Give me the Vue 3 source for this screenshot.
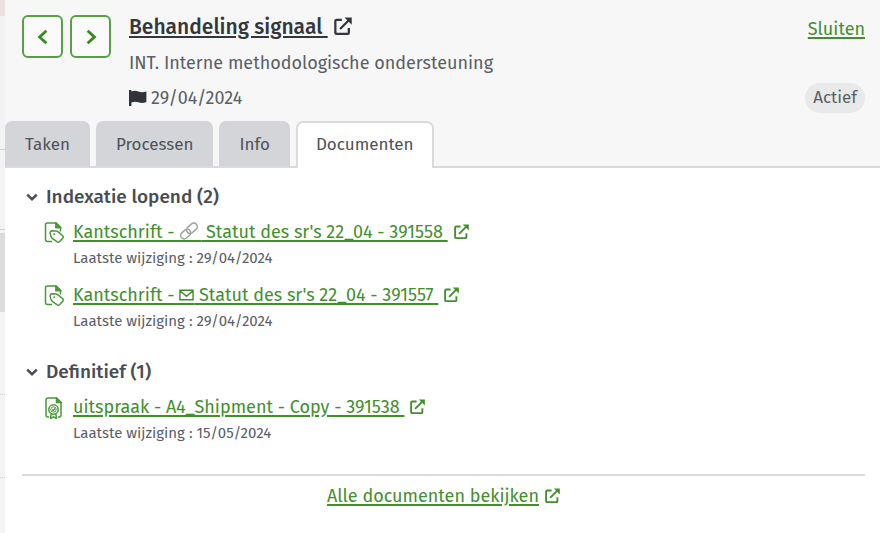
<script setup>
import { ref, h } from 'vue'

const tabs = ['Taken', 'Processen', 'Info', 'Documenten']
const activeTab = ref('Documenten')

const groups = ref([
  {
    title: 'Indexatie lopend',
    open: true,
    documents: [
      { type: 'tag', kind: 'Kantschrift - ', icon: 'clip', name: " Statut des sr's 22_04 - 391558", date: '29/04/2024' },
      { type: 'tag', kind: 'Kantschrift - ', icon: 'mail', name: " Statut des sr's 22_04 - 391557", date: '29/04/2024' },
    ],
  },
  {
    title: 'Definitief',
    open: true,
    documents: [
      { type: 'seal', kind: 'uitspraak - ', icon: '', name: 'A4_Shipment - Copy - 391538', date: '15/05/2024' },
    ],
  },
])

const ExternalIcon = () =>
  h('svg', { viewBox: '0 0 16 16', 'aria-hidden': 'true' }, [
    h('path', {
      d: 'M7 2.6H2.2Q1.2 2.6 1.2 3.6V14Q1.2 15 2.2 15H12.2Q13.2 15 13.2 14V9.8M5.4 10.6L13.4 2.6',
      fill: 'none',
      stroke: 'currentColor',
      'stroke-width': '2',
    }),
    h('path', { d: 'M9.4.4H15.8V6.8L13.7 4.9 11.3 2.5Z', fill: 'currentColor' }),
  ])
</script>

<template>
  <div class="page">
    <div class="backdrop" aria-hidden="true">
      <span class="photo"></span>
      <span class="row tall"></span>
      <span class="row short"></span>
      <span class="selected"></span>
      <span class="row dotted"></span>
      <span class="row dotted"></span>
    </div>

    <main class="panel">
      <header class="head">
        <div class="summary">
          <nav class="pager" aria-label="Navigatie">
            <button type="button" aria-label="Vorige">
              <svg viewBox="0 0 16 16"><path d="M11 2.500 5 8l6 5.500" /></svg>
            </button>
            <button type="button" aria-label="Volgende">
              <svg viewBox="0 0 16 16"><path d="M5 2.500 11 8l-6 5.500" /></svg>
            </button>
          </nav>
          <div class="details">
            <h1><a href="#signaal"><span class="underlined">Behandeling signaal&nbsp;</span><ExternalIcon class="external" /></a></h1>
            <p>INT. Interne methodologische ondersteuning</p>
            <p class="due">
              <svg viewBox="0 0 18 18" aria-hidden="true">
                <path d="M0 1h2.4v16H0zM2.4 2.4C5 1.3 7.2 1.7 9.4 2.6s4.600 1.100 8 0V13c-3 1.300-5.400 1.200-8 .3s-4.600-.9-7 .2z" />
              </svg>
              <span>29/04/2024</span>
            </p>
          </div>
          <div class="state">
            <a href="#sluiten" class="close">Sluiten</a>
            <span class="badge">Actief</span>
          </div>
        </div>
        <div class="tabs" role="tablist">
          <button
            v-for="tab in tabs"
            :key="tab"
            type="button"
            role="tab"
            :aria-selected="activeTab === tab"
            :class="{ active: activeTab === tab }"
            @click="activeTab = tab"
          >{{ tab }}</button>
        </div>
      </header>

      <div class="content">
        <section v-for="group in groups" :key="group.title">
          <h2>
            <button type="button" :aria-expanded="group.open" @click="group.open = !group.open">
              <svg viewBox="0 0 12 8" :class="{ closed: !group.open }" aria-hidden="true"><path d="M1.200 1.700 6 6.200l4.800-4.500" /></svg>
              <span>{{ group.title }} ({{ group.documents.length }})</span>
            </button>
          </h2>
          <ul v-if="group.open">
            <li v-for="doc in group.documents" :key="doc.name">
              <svg v-if="doc.type === 'tag'" class="file" viewBox="0 0 20 22" aria-hidden="true">
                <path d="M8 19.500H3.500Q1.500 19.500 1.500 17.500V3Q1.500 1 3.500 1H12L16.500 5.500V9.500M12 1V5.500H16.500" />
                <path class="fill" d="M12 1 16.500 5.500H12Z" />
                <path d="M6.200 11.500Q5.800 9 8.200 8.800L12 9Q13.400 9.100 14.400 10.100L18.700 13.800Q19.700 14.900 18.900 15.900L15.500 19.700Q14.500 20.700 13.200 19.900L8.300 16.300Q6.700 15 6.200 11.500Z" />
                <path d="M9.300 12.200h1.800" />
              </svg>
              <svg v-else class="file" viewBox="0 0 20 22" aria-hidden="true">
                <path d="M5 20H4Q2 20 2 18V3Q2 1 4 1H12.500L17 5.500V18Q17 20 15 20H14" />
                <path class="fill" d="M12.500 1 17 5.500H12.500Z" />
                <circle cx="9.500" cy="12.500" r="4.700" />
                <circle cx="9.500" cy="12.500" r="2.700" class="thin" />
                <path d="M7.200 16.500 6.500 21.500 9.500 19.800 12.500 21.500 11.800 16.500M8.200 12.500 9.200 13.500 11 11.500" />
              </svg>
              <div>
                <a href="#document">
                  <span class="underlined">{{ doc.kind }}<span v-if="doc.icon === 'clip'" class="mark wide"><svg class="clip" viewBox="0 0 20 18" aria-hidden="true"><g transform="rotate(-43 10 9)"><rect x="0" y="5.500" width="11" height="7" rx="3.500" /><rect x="8" y="5.500" width="12" height="7" rx="3.500" /></g></svg></span><span v-if="doc.icon === 'mail'" class="mark"><svg class="mail" viewBox="0 0 16 12" aria-hidden="true"><path d="M1 1H15V11H1ZM1 1.500 8 7.500 15 1.500" /></svg></span>{{ doc.name }}&nbsp;</span><ExternalIcon class="external" />
                </a>
                <p>Laatste wijziging : {{ doc.date }}</p>
              </div>
            </li>
          </ul>
        </section>
        <footer>
          <a href="#alle"><span class="underlined">Alle documenten bekijken</span><ExternalIcon class="external" /></a>
        </footer>
      </div>
    </main>
  </div>
</template>

<style>
body {
  background: #fff;
}
</style>

<style scoped>
.page {
  display: grid;
  grid-template-columns: 5px minmax(0, 1fr);
  min-height: 100vh;
  font-family: "Fira Sans", "Noto Sans", sans-serif;
  font-size: 18px;
  line-height: 24px;
  color: #5a5e65;
}
h1, h2, p, ul {
  margin: 0;
  padding: 0;
  font-weight: 400;
}
button {
  font: inherit;
  color: inherit;
  cursor: pointer;
}
a {
  color: #438f2e;
  text-decoration: none;
}
.underlined, .close {
  text-decoration: underline;
  text-decoration-thickness: 2px;
  text-underline-offset: 2px;
}
.backdrop {
  display: flex;
  flex-direction: column;
  background: #f3f3f3;
}
.backdrop span {
  box-sizing: border-box;
}
.photo {
  height: 16px;
  background: #e9e2de;
}
.row {
  border-bottom: 1px solid #cfd0d4;
}
.tall {
  height: 134px;
}
.short {
  height: 80px;
}
.selected {
  height: 79px;
  margin-top: 3px;
  background: #dcdcdc;
}
.dotted {
  height: 83px;
  border-bottom-style: dotted;
}
.head {
  background: #f7f7f7;
}
.summary {
  display: flex;
  padding: 14px 15px 8px 17px;
}
.pager {
  display: flex;
  gap: 7px;
  padding-top: 1px;
  margin-right: 18px;
}
.pager button {
  display: grid;
  place-items: center;
  box-sizing: border-box;
  width: 41px;
  height: 43px;
  padding: 0;
  color: #388a1c;
  background: #fafafa;
  border: 2px solid #58a044;
  border-radius: 6px;
}
.pager svg {
  width: 18px;
  height: 18px;
}
.pager path, h2 path {
  fill: none;
  stroke: currentColor;
  stroke-width: 2.500;
}
.details {
  flex: 1;
  padding-bottom: 3px;
}
h1 {
  font-size: 21px;
  font-weight: 500;
  line-height: 26px;
}
h1 a {
  color: #33373d;
}
h1 .external {
  width: 18px;
  height: 18px;
}
.details p {
  padding-top: 11px;
}
.due {
  display: flex;
  align-items: center;
  gap: 4px;
}
.due svg {
  width: 18px;
  height: 18px;
  fill: #2f343a;
}
.state {
  display: flex;
  flex-direction: column;
  justify-content: space-between;
  align-items: flex-end;
  padding-top: 3px;
}
.badge {
  padding: 3px 8px;
  font-size: 17px;
  background: #e9e9e9;
  border-radius: 15px;
}
.tabs {
  display: flex;
  gap: 6px;
  font-size: 17px;
  border-bottom: 2px solid #d9dade;
}
.tabs button {
  box-sizing: border-box;
  height: 45px;
  padding: 0 18px;
  color: #4e5258;
  background: #d3d5d9;
  border: 2px solid #d3d5d9;
  border-bottom: 0;
  border-radius: 7px 7px 0 0;
}
.tabs .active {
  height: 47px;
  margin: 0 0 -2px;
  padding-bottom: 2px;
  background: #fff;
  border-color: #d9dade;
}
.content {
  padding: 16px 15px 24px 17px;
}
h2 {
  font-size: 19px;
  font-weight: 500;
  line-height: 26px;
  color: #494d54;
}
h2 button {
  display: flex;
  align-items: center;
  gap: 8px;
  padding: 0 0 0 4px;
  border: 0;
  background: none;
}
h2 svg {
  width: 12px;
  height: 8px;
}
h2 .closed {
  transform: rotate(-90deg);
}
ul {
  list-style: none;
  padding: 10px 0 0 22px;
}
li {
  display: flex;
  gap: 9px;
  padding-bottom: 11px;
}
section {
  padding-bottom: 13px;
}
li p {
  font-size: 15px;
  line-height: 28px;
}
.file {
  width: 20px;
  height: 22px;
  margin-top: 2px;
  fill: none;
  stroke: #4a9836;
  stroke-width: 1.500;
}
.file .fill {
  fill: #4a9836;
}
.file .thin {
  stroke-width: 1;
}
.mark {
  display: inline-flex;
  padding-bottom: 2px;
  border-bottom: 2px solid #438f2e;
}
.wide {
  padding: 0 2px 0 0;
  vertical-align: -2px;
}
.clip {
  width: 20px;
  height: 18px;
  fill: none;
  stroke: #a0a0a0;
  stroke-width: 1.500;
}
.mail {
  width: 15px;
  height: 12px;
  fill: none;
  stroke: #3f8f29;
  stroke-width: 1.500;
}
.external {
  width: 15px;
  height: 15px;
  margin-left: 6px;
  vertical-align: -1px;
}
footer {
  margin-top: 3px;
  padding-top: 8px;
  border-top: 2px solid #d9dade;
  text-align: center;
}
</style>
